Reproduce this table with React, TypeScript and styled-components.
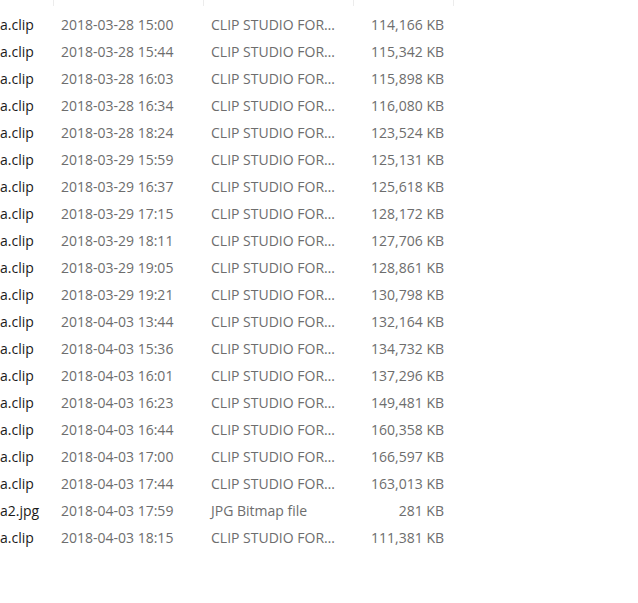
import React from "react";
import styled, { createGlobalStyle } from "styled-components";

type FileRow = {
  name: string;
  modified: string;
  kind: string;
  size: string;
};

const CLIP = "CLIP STUDIO FOR…";

const files: FileRow[] = [
  { name: "a.clip", modified: "2018-03-28 15:00", kind: CLIP, size: "114,166 KB" },
  { name: "a.clip", modified: "2018-03-28 15:44", kind: CLIP, size: "115,342 KB" },
  { name: "a.clip", modified: "2018-03-28 16:03", kind: CLIP, size: "115,898 KB" },
  { name: "a.clip", modified: "2018-03-28 16:34", kind: CLIP, size: "116,080 KB" },
  { name: "a.clip", modified: "2018-03-28 18:24", kind: CLIP, size: "123,524 KB" },
  { name: "a.clip", modified: "2018-03-29 15:59", kind: CLIP, size: "125,131 KB" },
  { name: "a.clip", modified: "2018-03-29 16:37", kind: CLIP, size: "125,618 KB" },
  { name: "a.clip", modified: "2018-03-29 17:15", kind: CLIP, size: "128,172 KB" },
  { name: "a.clip", modified: "2018-03-29 18:11", kind: CLIP, size: "127,706 KB" },
  { name: "a.clip", modified: "2018-03-29 19:05", kind: CLIP, size: "128,861 KB" },
  { name: "a.clip", modified: "2018-03-29 19:21", kind: CLIP, size: "130,798 KB" },
  { name: "a.clip", modified: "2018-04-03 13:44", kind: CLIP, size: "132,164 KB" },
  { name: "a.clip", modified: "2018-04-03 15:36", kind: CLIP, size: "134,732 KB" },
  { name: "a.clip", modified: "2018-04-03 16:01", kind: CLIP, size: "137,296 KB" },
  { name: "a.clip", modified: "2018-04-03 16:23", kind: CLIP, size: "149,481 KB" },
  { name: "a.clip", modified: "2018-04-03 16:44", kind: CLIP, size: "160,358 KB" },
  { name: "a.clip", modified: "2018-04-03 17:00", kind: CLIP, size: "166,597 KB" },
  { name: "a.clip", modified: "2018-04-03 17:44", kind: CLIP, size: "163,013 KB" },
  { name: "a2.jpg", modified: "2018-04-03 17:59", kind: "JPG Bitmap file", size: "281 KB" },
  { name: "a.clip", modified: "2018-04-03 18:15", kind: CLIP, size: "111,381 KB" },
];

const columns = "53px 150px 150px 100px";

const App: React.FC = () => {
  return (
    <>
      <GlobalStyle />
      <Listing>
        <HeaderStub>
          <Divider />
          <Divider />
          <Divider />
          <Divider />
        </HeaderStub>
        {files.map((file, i) => (
          <Row key={i}>
            <NameCell>{file.name}</NameCell>
            <DetailCell>{file.modified}</DetailCell>
            <DetailCell>{file.kind}</DetailCell>
            <DetailCell $right>{file.size}</DetailCell>
          </Row>
        ))}
      </Listing>
    </>
  );
};

export default App;

const GlobalStyle = createGlobalStyle`
  html, body {
    margin: 0;
    padding: 0;
    background: #ffffff;
  }
  body {
    width: 638px;
    height: 603px;
    overflow: hidden;
    font-family: "Open Sans", "Noto Sans", "Liberation Sans", sans-serif;
  }
`;

const Listing = styled.div`
  display: flex;
  flex-direction: column;
`;

// only the lower edge of the column header is left in the crop
const HeaderStub = styled.div`
  display: grid;
  grid-template-columns: ${columns};
  height: 11px;
`;

const Divider = styled.div`
  height: 6px;
  border-right: 1px solid #ececec;
  margin-right: -1px;
`;

const Row = styled.div`
  display: grid;
  grid-template-columns: ${columns};
  align-items: center;
  height: 27px;
  font-size: 14px;
  line-height: 27px;
`;

const NameCell = styled.div`
  color: #1a1a1a;
  white-space: nowrap;
  overflow: hidden;
  padding-left: 0;
`;

const DetailCell = styled.div<{ $right?: boolean }>`
  color: #6d6d6d;
  white-space: nowrap;
  overflow: hidden;
  padding: ${(p) => (p.$right ? "0 9px 0 0" : "0 0 0 8px")};
  text-align: ${(p) => (p.$right ? "right" : "left")};
`;
